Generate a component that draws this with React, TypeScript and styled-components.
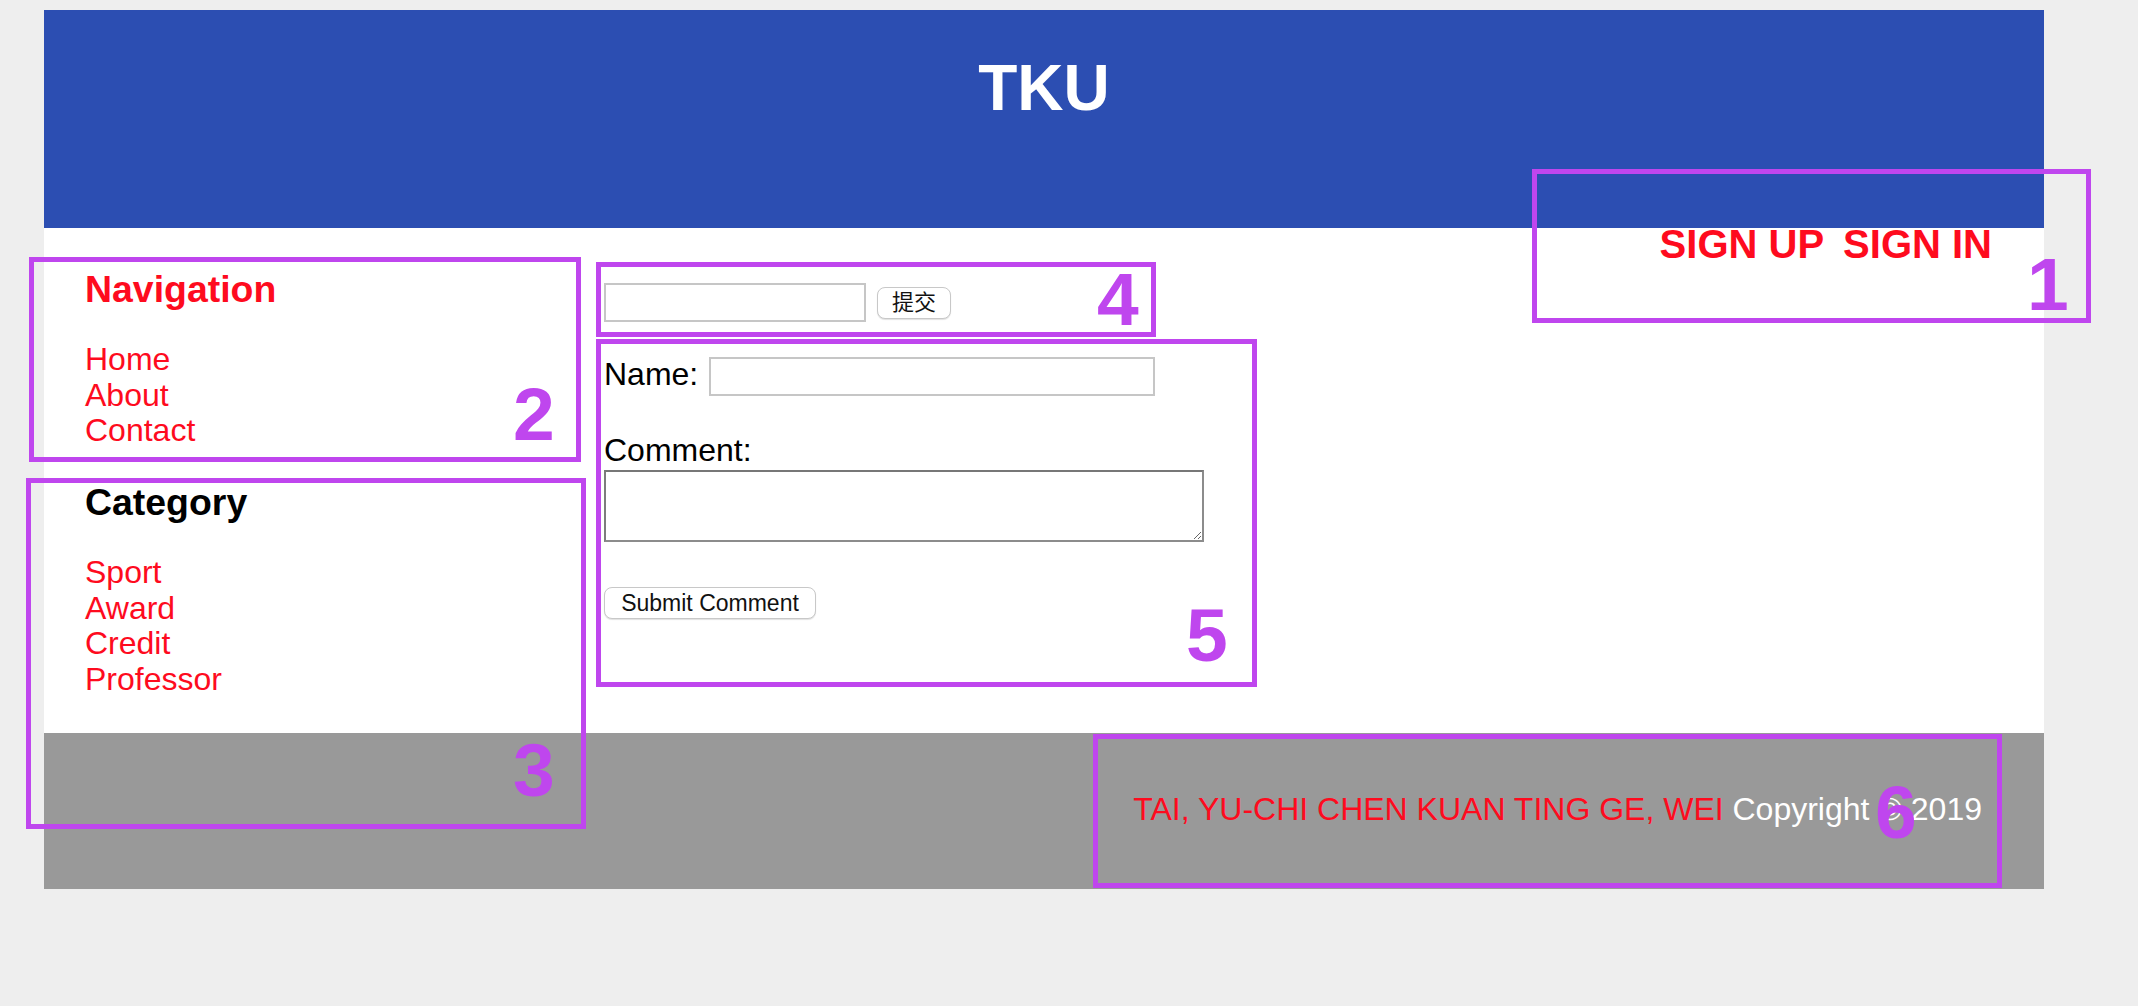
import React from "react";
import styled, { createGlobalStyle } from "styled-components";

const GlobalStyle = createGlobalStyle`
  html, body {
    margin: 0;
    padding: 0;
    background: #eeeeee;
  }
  body {
    font-family: "Liberation Sans", Arial, Helvetica, sans-serif;
  }
  * {
    box-sizing: border-box;
  }
`;

const RED = "#fe0b1e";
const PURPLE = "#bf46ee";

const Page = styled.div`
  position: relative;
  min-height: 1006px;
  padding: 10px 0 0 44px;
`;

const Frame = styled.div`
  width: 2000px;
`;

const Header = styled.header`
  height: 218px;
  padding-top: 41px;
  background: #2c4eb2;
`;

const Title = styled.h1`
  margin: 0;
  color: #ffffff;
  font-size: 64px;
  line-height: 74px;
  font-weight: bold;
  text-align: center;
`;

const Content = styled.div`
  display: grid;
  grid-template-columns: 560px 1fr auto;
  background: #ffffff;
`;

const Sidebar = styled.aside`
  padding: 39.5px 0 3px 41px;
`;

const SideHeading = styled.h3<{ $color: string }>`
  margin: 0 0 31.5px;
  color: ${(p) => p.$color};
  font-size: 37.44px;
  line-height: 43px;
  font-weight: bold;
`;

const LinkList = styled.ul`
  list-style: none;
  margin: 0 0 32px;
  padding: 0;
`;

const SideLink = styled.a`
  display: block;
  color: ${RED};
  font-size: 32px;
  line-height: 35.6px;
  text-decoration: none;
`;

const Main = styled.main`
  padding-top: 55px;
`;

const SearchRow = styled.form`
  display: flex;
  align-items: center;
  gap: 11px;
  margin: 0;
`;

const TextInput = styled.input<{ $width: number }>`
  width: ${(p) => p.$width}px;
  height: 39px;
  margin: 0;
  border: 2px solid #c6c6c6;
  background: #ffffff;
  font-size: 26px;
  outline: none;
`;

const NativeButton = styled.button<{ $width?: number }>`
  height: 32px;
  ${(p) => (p.$width ? `width: ${p.$width}px;` : "")}
  margin: 0;
  padding: 0 14px;
  border: 1px solid #c8c8c8;
  border-radius: 8px;
  background: #ffffff;
  box-shadow: 0 1px 1px rgba(0, 0, 0, 0.12);
  color: #111111;
  font-family: "Liberation Sans", "Noto Sans CJK SC", sans-serif;
  font-size: ${(p) => (p.$width ? 23 : 22)}px;
  line-height: 30px;
  white-space: nowrap;
`;

const CommentForm = styled.form`
  margin: 35px 0 0;
`;

const FieldRow = styled.div`
  display: flex;
  align-items: flex-start;
  gap: 11px;
`;

const FieldLabel = styled.label<{ $block?: boolean }>`
  display: ${(p) => (p.$block ? "block" : "inline-block")};
  margin-top: ${(p) => (p.$block ? "36.8px" : "0")};
  color: #000000;
  font-size: 32px;
  line-height: 35.6px;
`;

const CommentBox = styled.textarea`
  display: block;
  width: 600px;
  height: 72px;
  margin: 1.6px 0 0;
  border: 2px solid #8c8c8c;
  border-top-color: #777777;
  border-left-color: #7d7d7d;
  background: #ffffff;
  resize: both;
  outline: none;
`;

const SubmitRow = styled.div`
  margin-top: 45px;
`;

const Auth = styled.nav`
  display: flex;
  gap: 19px;
  align-self: start;
  padding-right: 52px;
`;

const AuthLink = styled.a`
  color: ${RED};
  font-size: 40px;
  line-height: 32px;
  font-weight: bold;
  text-decoration: none;
`;

const Footer = styled.footer`
  height: 156px;
  padding: 59px 62px 0 0;
  background: #999999;
  font-size: 32px;
  line-height: 35.6px;
  text-align: right;
`;

const Names = styled.span`
  color: ${RED};
`;

const Copy = styled.span`
  color: #ffffff;
`;

const Marker = styled.div<{ $x: number; $y: number; $w: number; $h: number }>`
  position: absolute;
  left: ${(p) => p.$x}px;
  top: ${(p) => p.$y}px;
  width: ${(p) => p.$w}px;
  height: ${(p) => p.$h}px;
  border: 5px solid ${PURPLE};
  pointer-events: none;
`;

const MarkerNumber = styled.span<{ $x: number; $y: number }>`
  position: absolute;
  left: ${(p) => p.$x}px;
  top: ${(p) => p.$y}px;
  color: ${PURPLE};
  font-size: 75px;
  line-height: 1;
  font-weight: bold;
  pointer-events: none;
`;

const markers = [
  { n: "1", x: 1532, y: 169, w: 559, h: 154, nx: 2027, ny: 247 },
  { n: "2", x: 29, y: 257, w: 552, h: 205, nx: 513, ny: 377 },
  { n: "3", x: 26, y: 478, w: 560, h: 351, nx: 513, ny: 733 },
  { n: "4", x: 596, y: 262, w: 560, h: 75, nx: 1097, ny: 262 },
  { n: "5", x: 596, y: 339, w: 661, h: 348, nx: 1186, ny: 598 },
  { n: "6", x: 1093, y: 734, w: 909, h: 154, nx: 1875, ny: 775 },
];

const navLinks = ["Home", "About", "Contact"];
const categories = ["Sport", "Award", "Credit", "Professor"];

export default function App() {
  return (
    <>
      <GlobalStyle />
      <Page>
        <Frame>
          <Header>
            <Title>TKU</Title>
          </Header>
          <Content>
            <Sidebar>
              <SideHeading $color={RED}>Navigation</SideHeading>
              <LinkList>
                {navLinks.map((l) => (
                  <li key={l}>
                    <SideLink href="#">{l}</SideLink>
                  </li>
                ))}
              </LinkList>
              <SideHeading $color="#000000">Category</SideHeading>
              <LinkList>
                {categories.map((l) => (
                  <li key={l}>
                    <SideLink href="#">{l}</SideLink>
                  </li>
                ))}
              </LinkList>
            </Sidebar>
            <Main>
              <SearchRow onSubmit={(e) => e.preventDefault()}>
                <TextInput $width={262} type="text" />
                <NativeButton type="submit">提交</NativeButton>
              </SearchRow>
              <CommentForm onSubmit={(e) => e.preventDefault()}>
                <FieldRow>
                  <FieldLabel>Name:</FieldLabel>
                  <TextInput $width={446} type="text" />
                </FieldRow>
                <FieldLabel $block>Comment:</FieldLabel>
                <CommentBox />
                <SubmitRow>
                  <NativeButton $width={212} type="submit">
                    Submit Comment
                  </NativeButton>
                </SubmitRow>
              </CommentForm>
            </Main>
            <Auth>
              <AuthLink href="#">SIGN UP</AuthLink>
              <AuthLink href="#">SIGN IN</AuthLink>
            </Auth>
          </Content>
          <Footer>
            <Names>TAI, YU-CHI CHEN KUAN TING GE, WEI</Names>{" "}
            <Copy>Copyright © 2019</Copy>
          </Footer>
        </Frame>
        {markers.map((m) => (
          <React.Fragment key={m.n}>
            <Marker $x={m.x} $y={m.y} $w={m.w} $h={m.h} />
            <MarkerNumber $x={m.nx} $y={m.ny}>
              {m.n}
            </MarkerNumber>
          </React.Fragment>
        ))}
      </Page>
    </>
  );
}
